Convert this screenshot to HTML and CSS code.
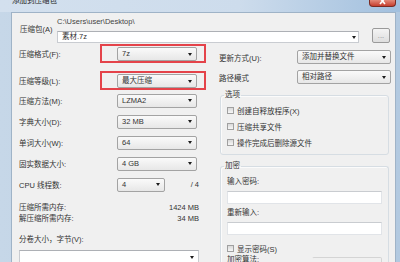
FILE: index.html
```html
<!DOCTYPE html>
<html>
<head>
  <meta charset="utf-8">
  <title>添加到压缩包</title>
  <link rel="stylesheet" href="styles.css">
</head>
<body>
  <div class="titlebar">
    <span class="title">添加到压缩包</span>
    <span class="close-btn">
      <svg width="9" height="6" viewBox="0 0 9 6"><path d="M2 -2 L7 4 M7 -2 L2 4" stroke="#fff" stroke-width="1.6"/></svg>
    </span>
  </div>

  <div class="frame">
    <div class="client">

      <div class="archive">
        <span class="archive-label">压缩包(A)</span>
        <span class="archive-path">C:\Users\user\Desktop\</span>
        <div class="combo edit archive-combo">素材.7z<span class="arrow"></span></div>
        <button class="browse">...</button>
      </div>

      <div class="main">
        <div class="left">
          <div class="mark-row first">
            <span class="label short">压缩格式(F):</span>
            <div class="mark"><div class="combo">7z<span class="arrow"></span></div></div>
          </div>
          <div class="mark-row">
            <span class="label short">压缩等级(L):</span>
            <div class="mark"><div class="combo">最大压缩<span class="arrow"></span></div></div>
          </div>

          <div class="row">
            <span class="label">压缩方法(M):</span>
            <div class="combo">LZMA2<span class="arrow"></span></div>
          </div>
          <div class="row">
            <span class="label">字典大小(D):</span>
            <div class="combo">32 MB<span class="arrow"></span></div>
          </div>
          <div class="row">
            <span class="label">单词大小(W):</span>
            <div class="combo">64<span class="arrow"></span></div>
          </div>
          <div class="row">
            <span class="label">固实数据大小:</span>
            <div class="combo">4 GB<span class="arrow"></span></div>
          </div>
          <div class="row cpu">
            <span class="label">CPU 线程数:</span>
            <div class="combo small">4<span class="arrow"></span></div>
            <span class="cpu-max">/ 4</span>
          </div>

          <div class="info first">
            <span>压缩所需内存:</span>
            <span>1424 MB</span>
          </div>
          <div class="info">
            <span>解压缩所需内存:</span>
            <span>34 MB</span>
          </div>

          <div class="volume-label">分卷大小，字节(V):</div>
          <div class="combo edit volume-combo"><span class="arrow"></span></div>
        </div>

        <div class="right">
          <div class="rrow first">
            <span class="rlabel">更新方式(U):</span>
            <div class="combo wide">添加并替换文件<span class="arrow"></span></div>
          </div>
          <div class="rrow">
            <span class="rlabel">路径模式</span>
            <div class="combo wide">相对路径<span class="arrow"></span></div>
          </div>

          <fieldset class="group options">
            <legend>选项</legend>
            <div class="check"><span class="box"></span>创建自释放程序(X)</div>
            <div class="check"><span class="box"></span>压缩共享文件</div>
            <div class="check"><span class="box"></span>操作完成后删除源文件</div>
          </fieldset>

          <fieldset class="group crypt">
            <legend>加密</legend>
            <div class="field-label first">输入密码:</div>
            <div class="textbox"></div>
            <div class="field-label">重新输入:</div>
            <div class="textbox"></div>
            <div class="check show-pass"><span class="box"></span>显示密码(S)</div>
            <div class="method">
              <span>加密算法:</span>
              <div class="combo method-combo"></div>
            </div>
          </fieldset>
        </div>
      </div>

    </div>
  </div>
</body>
</html>
```

FILE: styles.css
```css
* {
  box-sizing: border-box;
}
body {
  margin: 0;
  width: 400px;
  height: 262px;
  overflow: hidden;
  font-family: "Liberation Sans", "Noto Sans CJK SC", sans-serif;
  font-size: 7.5px;
  color: #333;
  background: linear-gradient(to right, #c6d7e8, #b2c9e0);
}

/* window chrome */
.titlebar {
  height: 12px;
  display: flex;
  overflow: hidden;
  background: linear-gradient(to right, #d3e0ee, #cddcec 60%, #a2c0de);
}
.title {
  margin: -4px 0 0 12px;
  line-height: 10px;
  color: #1b1b1b;
}
.close-btn {
  margin: 0 4px 0 auto;
  width: 27px;
  height: 7px;
  display: flex;
  justify-content: center;
  background: linear-gradient(#e48a7a, #c63f2f);
  border: 1px solid #7b2b23;
  border-top: none;
  border-radius: 0 0 4px 4px;
}
.frame {
  display: flex;
  padding: 0 4px 0 11px;
}
.client {
  flex: 1;
  height: 250px;
  background: #f0f0f0;
  border: 1px solid #9fb3c7;
  border-bottom: none;
  padding: 4px 0 0 7px;
}

/* controls */
.combo {
  display: flex;
  align-items: center;
  justify-content: space-between;
  width: 80px;
  height: 14px;
  padding: 0 4px 0 4px;
  border: 1px solid #a3a3a3;
  border-radius: 2px;
  background: linear-gradient(#fafafa, #e7e7e7);
  line-height: 12px;
  white-space: nowrap;
}
.combo.edit {
  background: #fff;
  border-color: #c9ccd1;
  border-top-color: #adb0b5;
  border-radius: 0;
}
.arrow {
  margin-left: auto;
  width: 0;
  height: 0;
  border-left: 2.5px solid transparent;
  border-right: 2.5px solid transparent;
  border-top: 3px solid #1c1c1c;
}
.browse {
  width: 18px;
  height: 15px;
  padding: 0;
  font: inherit;
  line-height: 10px;
  color: #8d8d8d;
  border: 1px solid #9a9a9a;
  border-radius: 2px;
  background: linear-gradient(#f4f4f4, #dedede);
}

/* archive name */
.archive {
  display: grid;
  grid-template-columns: 38px 302px 13px 18px;
  grid-template-rows: 10px auto;
}
.archive-label {
  grid-row: 1 / span 2;
  align-self: center;
  padding: 0 0 3px 1px;
  white-space: nowrap;
}
.archive-path {
  grid-column: 2;
  line-height: 10px;
  color: #444;
  white-space: nowrap;
}
.archive-combo {
  grid-column: 2;
  width: 302px;
  height: 12px;
  margin-top: 4px;
  padding-right: 2px;
}
.browse {
  grid-column: 4;
  grid-row: 1 / span 2;
  align-self: end;
}

/* two columns */
.main {
  display: flex;
}
.left {
  width: 187px;
  white-space: nowrap;
}
.right {
  width: 173px;
  margin-left: 13px;
  white-space: nowrap;
}

.mark-row {
  display: flex;
  align-items: center;
  margin-top: 8px;
}
.mark-row.first {
  margin-top: 1px;
}
.label {
  width: 98px;
  flex-shrink: 0;
}
.label.short {
  width: 81px;
}
.mark {
  border: 2px solid #e4434a;
  padding: 1px 7px 0 15px;
}
.row {
  display: flex;
  align-items: center;
  height: 21px;
}
.cpu {
  width: 180px;
}
.combo.small {
  width: 48px;
}
.cpu-max {
  margin-left: auto;
}
.info {
  display: flex;
  justify-content: space-between;
  width: 180px;
  line-height: 11px;
}
.info.first {
  margin-top: 7px;
}
.volume-label {
  margin-top: 11px;
  line-height: 10px;
}
.volume-combo {
  width: 180px;
  margin-top: 5px;
}

/* right column */
.rrow {
  display: flex;
  align-items: center;
  margin-top: 6px;
}
.rrow.first {
  margin-top: 7px;
}
.rlabel {
  width: 78px;
}
.combo.wide {
  width: 94px;
}
.group {
  width: 169px;
  margin: 6px 0 0 1px;
  padding: 0 0 4px 3px;
  border: 1px solid #d6dde3;
  border-radius: 3px;
  box-shadow: inset 1px 1px #fbfbfb;
}
.group legend {
  padding: 0 1px;
  line-height: 10px;
}
.options {
  padding-top: 2px;
}
.check {
  display: flex;
  align-items: center;
  height: 16px;
  padding-left: 3px;
}
.box {
  width: 7px;
  height: 7px;
  margin-right: 3px;
  border: 1px solid #a0a0a0;
  background: linear-gradient(#d9d9d9, #f7f7f7);
}
.crypt {
  height: 110px;
  border-bottom: none;
}
.field-label {
  margin: 4px 0 0 3px;
  line-height: 10px;
}
.field-label.first {
  margin-top: 6px;
}
.textbox {
  width: 155px;
  height: 13px;
  margin: 4px 0 0 3px;
  background: #fff;
  border: 1px solid #e1e4e8;
  border-top-color: #c9ccd0;
}
.show-pass {
  height: 10px;
  margin-top: 8px;
}
.method {
  display: flex;
  justify-content: space-between;
  width: 158px;
  margin-top: 2px;
  padding-left: 3px;
  line-height: 10px;
}
.method-combo {
  width: 70px;
  margin-top: 2px;
  border-color: #d4d4d4;
  border-left-color: transparent;
  background: none;
}
```
